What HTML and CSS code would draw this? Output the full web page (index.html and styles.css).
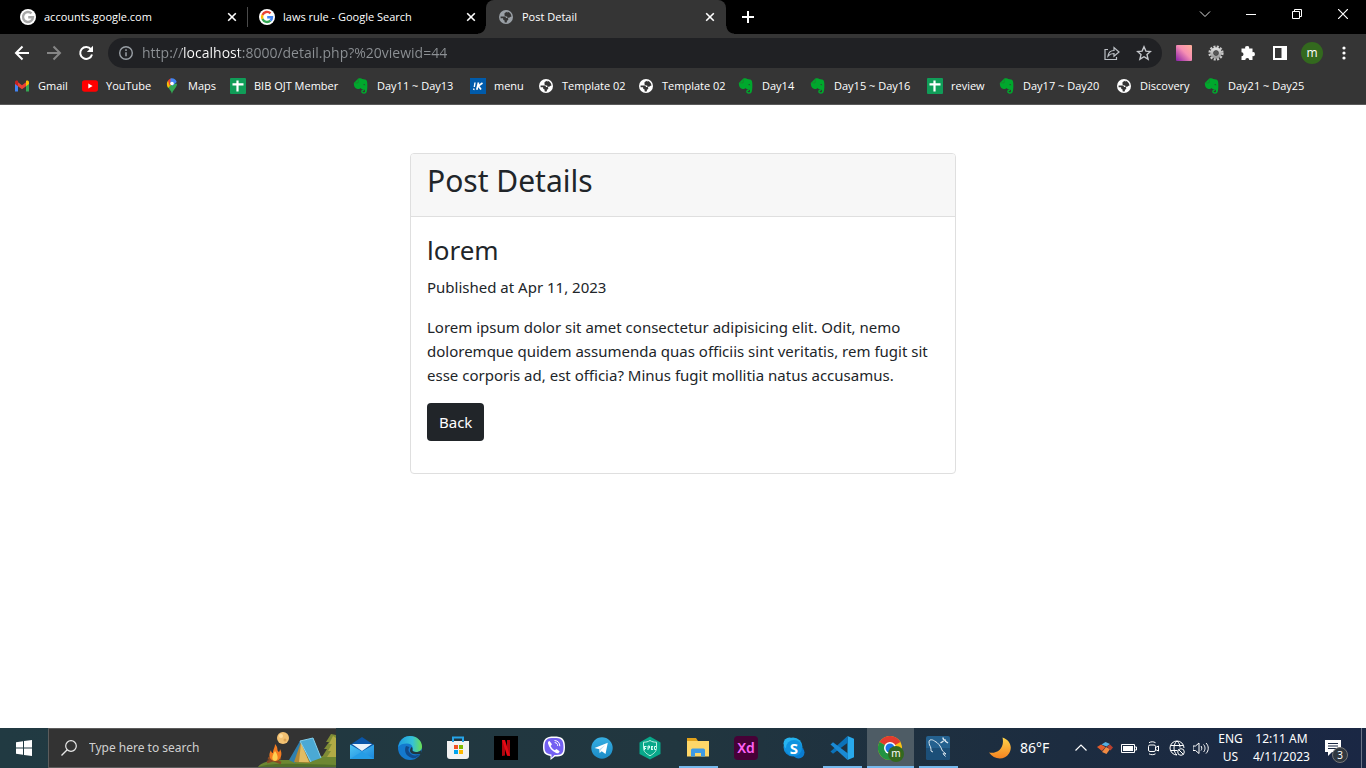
FILE: index.html
```html
<!DOCTYPE html>
<html lang="en">
<head>
<meta charset="utf-8">
<title>Post Detail</title>
<link rel="stylesheet" href="styles.css">
</head>
<body>
<svg class="defs" aria-hidden="true">
  <defs>
    <linearGradient id="gGear" x1="0" y1="0" x2="0" y2="1"><stop offset="0" stop-color="#ddd"/><stop offset="1" stop-color="#999"/></linearGradient>
    <linearGradient id="gPink" x1="1" y1="0" x2="0" y2="1"><stop offset="0" stop-color="#ffb199"/><stop offset=".45" stop-color="#f78fb3"/><stop offset="1" stop-color="#8a1fa8"/></linearGradient>
    <linearGradient id="gMoon" x1="0" y1="0" x2="0" y2="1"><stop offset="0" stop-color="#ffd54a"/><stop offset="1" stop-color="#f58220"/></linearGradient>
    <linearGradient id="gEdge" x1="0" y1="0" x2="1" y2="0"><stop offset="0" stop-color="#1f9de0"/><stop offset=".6" stop-color="#35c1d8"/><stop offset="1" stop-color="#6be04f"/></linearGradient>
    <linearGradient id="gMail" x1="0" y1="0" x2="1" y2="1"><stop offset="0" stop-color="#4fc7f5"/><stop offset="1" stop-color="#1a86dc"/></linearGradient>
    <linearGradient id="gTele" x1="0" y1="0" x2="0" y2="1"><stop offset="0" stop-color="#36aee2"/><stop offset="1" stop-color="#1c8cc7"/></linearGradient>
    <linearGradient id="gSky" x1="0" y1="0" x2="0" y2="1"><stop offset="0" stop-color="#22b7f2"/><stop offset="1" stop-color="#0a7cd0"/></linearGradient>
  </defs>
  <symbol id="x" viewBox="0 0 10 10"><path d="M1.200 1.200l7.600 7.600M8.800 1.200L1.200 8.800" fill="none" stroke="currentColor" stroke-width="1.600"/></symbol>
  <symbol id="globe" viewBox="0 0 16 16"><circle cx="8" cy="8" r="7" fill="currentColor"/><path d="M2.600 7.600H6c1.400 0 2 .7 2 1.500h1.200c.7 0 1.100.6 1.100 1.200 0 .8-.6 1.200-1.400 1.200v1.700c-.8.400-2 .300-2.300 0v-1.700c-.9 0-1.500-.6-1.500-1.400v-.9H2.600z" fill="#353535"/><path d="M9.600 2.700c0 1-.8 1.600-1.900 1.700v1h1.400c.8 0 1.400.6 1.400 1.500v.8h2.900c.1-2.300-1.500-4.300-3.800-5zM8.600 2.700L6.500 4.200v1.900c0 .8.600 1.400 1.400 1.400h1.300v1.300h2l2-1.600-2.700-.5z" fill="#353535"/></symbol>
  <symbol id="sheet" viewBox="0 0 16 16"><rect width="16" height="16" rx="1" fill="#109d58"/><path d="M7.500 2.500v11M2.500 6.300h11" stroke="#fff" stroke-width="2.200"/></symbol>
  <symbol id="evernote" viewBox="0 0 16 16"><path d="M5.300.5C7 0 8.600.2 9.300 1l2.700.5c1.500.3 2 1.200 2.200 3 .3 3 .2 6.500-.4 9-.4 1.600-1.300 2.200-3 2.200-1.600 0-2.600-.8-2.600-2.200s1-2.200 2.800-2.100v1.300c-.9-.1-1.400.2-1.400.8 0 .5.500.8 1.200.8.800 0 1.200-.4 1.200-1.400 0-1.100-.6-1.500-2-1.600-1.200-.1-1.900-.4-2.300-1.300-.7 1.100-2 1.300-3.900.8C1.700 10.200.8 8 .8 5z" fill="#00a82d"/><path d="M1.500 4.900h3.200c.4 0 .6-.2.600-.6V1.200" fill="none" stroke="#26722f" stroke-width=".6"/><path d="M10.300 7c.2-1 1.800-1 2 .3z" fill="#353535"/></symbol>
  <symbol id="google" viewBox="0 0 16 16"><circle cx="8" cy="8" r="8" fill="#fff"/><g fill="none" stroke-width="2.400"><path d="M11.500 4.300A5 5 0 0 0 3.500 5.900" stroke="#ea4335"/><path d="M3.500 5.900a5 5 0 0 0 0 4.200" stroke="#fbbc05"/><path d="M3.500 10.100a5 5 0 0 0 7.900 1.600" stroke="#34a853"/><path d="M11.400 11.700A4.700 4.700 0 0 0 13 8.200H8.200" stroke="#4285f4"/></g></symbol>
  <symbol id="chrome" viewBox="0 0 24 24"><circle cx="12" cy="12" r="12" fill="#fbc116"/><path d="M12 12L1.600 6A12 12 0 0 1 22.400 6z" fill="#e33b2e"/><path d="M12 12L1.600 6a12 12 0 0 0 10.400 18l5-9z" fill="#229342"/><circle cx="12" cy="12" r="6" fill="#fff"/><circle cx="12" cy="12" r="4.500" fill="#1a73e8"/></symbol>
</svg>

<header class="browser">
  <div class="tabs">
    <button class="tab" type="button">
      <svg class="i16" viewBox="0 0 16 16"><circle cx="8" cy="8" r="8" fill="#fff"/><path d="M11.500 4.400A5 5 0 1 0 13 8.200H8.200" fill="none" stroke="#a8a8a8" stroke-width="2.400"/></svg>
      <span class="tab-title">accounts.google.com</span>
      <svg class="i10"><use href="#x"/></svg>
    </button>
    <button class="tab divided" type="button">
      <svg class="i16"><use href="#google"/></svg>
      <span class="tab-title">laws rule - Google Search</span>
      <svg class="i10"><use href="#x"/></svg>
    </button>
    <button class="tab active" type="button">
      <svg class="i16 dim"><use href="#globe"/></svg>
      <span class="tab-title">Post Detail</span>
      <svg class="i10"><use href="#x"/></svg>
    </button>
    <button class="new-tab" type="button" aria-label="New tab"><svg class="i12" viewBox="0 0 12 12"><path d="M6 0v12M0 6h12" stroke="#fff" stroke-width="2"/></svg></button>
    <div class="window-controls">
      <button type="button" aria-label="Search tabs"><svg class="i12" viewBox="0 0 12 12"><path d="M1 3.500l5 5 5-5" fill="none" stroke="#ddd"/></svg></button>
      <button type="button" aria-label="Minimize"><svg class="i10" viewBox="0 0 10 10"><path d="M0 5.500h10" stroke="#fff"/></svg></button>
      <button type="button" aria-label="Restore"><svg class="i10" viewBox="0 0 10 10"><path d="M.5 2.500h7v7h-7zM2.500 2.500v-2h7v7h-2" fill="none" stroke="#fff"/></svg></button>
      <button type="button" aria-label="Close"><svg class="i10" viewBox="0 0 10 10"><path d="M0 0l10 10M10 0L0 10" stroke="#fff" stroke-width="1.200"/></svg></button>
    </div>
  </div>

  <div class="toolbar">
    <div class="nav-buttons">
      <button type="button" aria-label="Back"><svg class="i16" viewBox="0 0 16 16"><path d="M15 8H2.500M8.500 1.500L2 8l6.500 6.500" fill="none" stroke="#fff" stroke-width="2"/></svg></button>
      <button type="button" aria-label="Forward"><svg class="i16" viewBox="0 0 16 16"><path d="M1 8h12.500M7.500 1.500L14 8l-6.500 6.500" fill="none" stroke="#868686" stroke-width="2"/></svg></button>
      <button type="button" aria-label="Reload"><svg class="i16" viewBox="0 0 16 16"><path d="M13 4.300A6 6 0 1 0 14 9.500" fill="none" stroke="#fff" stroke-width="2"/><path d="M15 .8V7H8.800z" fill="#fff"/></svg></button>
    </div>
    <div class="omnibox">
      <svg class="i16" viewBox="0 0 16 16"><circle cx="8" cy="8" r="6.300" fill="none" stroke="#9aa0a6" stroke-width="1.400"/><path d="M8 7.200v4M8 4.300v1.600" stroke="#9aa0a6" stroke-width="1.500"/></svg>
      <input class="url" type="text" aria-label="Address" value="http://localhost:8000/detail.php?%20viewid=44">
      <button type="button" aria-label="Share"><svg class="i16" viewBox="0 0 16 16"><path d="M4 4.500H1v10h11.500V12M4 11c.5-4 3-5.500 6-5.500V2.500L15 7l-5 4.200V8.500C7.500 8.500 5.500 9.200 4 11z" fill="none" stroke="#bdc1c6" stroke-width="1.200"/></svg></button>
      <button type="button" aria-label="Bookmark"><svg class="i16" viewBox="0 0 16 16"><path d="M8 1.800l1.900 4.300 4.600.4-3.500 3.100 1.100 4.600L8 11.700l-4.100 2.500L5 9.600 1.500 6.500l4.600-.4z" fill="none" stroke="#c4c7cb" stroke-width="1.400"/></svg></button>
    </div>
    <div class="extensions">
      <button type="button" aria-label="Gradient extension"><svg class="i16" viewBox="0 0 16 16"><rect width="16" height="16" rx="1" fill="url(#gPink)"/></svg></button>
      <button type="button" aria-label="Settings extension"><svg class="i16" viewBox="0 0 16 16"><circle cx="8" cy="8" r="6.300" fill="none" stroke="#c9c9c9" stroke-width="2.600" stroke-dasharray="2 1.300"/><circle cx="8" cy="8" r="4.200" fill="none" stroke="url(#gGear)" stroke-width="3"/><circle cx="8" cy="8" r="2.300" fill="#555"/></svg></button>
      <button type="button" aria-label="Extensions"><svg class="i16" viewBox="0 0 16 16"><path d="M1.500 3.500h3.700a2 2 0 1 1 3.900 0h3.400v3.700a2 2 0 1 1 0 3.900V15H9.300a2 2 0 0 0-4 0H1.500v-3.800a2 2 0 0 0 0-4z" fill="#fff"/></svg></button>
      <button type="button" aria-label="Side panel"><svg class="i16" viewBox="0 0 16 16"><path d="M1 1h14v14H1zM3 3v10h6.500V3z" fill="#fff" fill-rule="evenodd"/></svg></button>
      <button class="avatar" type="button">m</button>
      <button type="button" aria-label="Menu"><svg class="i16" viewBox="0 0 16 16"><g fill="#fff"><circle cx="8" cy="3" r="1.600"/><circle cx="8" cy="8" r="1.600"/><circle cx="8" cy="13" r="1.600"/></g></svg></button>
    </div>
  </div>

  <nav class="bookmarks">
    <a href="#"><svg class="i16" viewBox="0 0 16 16"><path d="M1 4v9.500h3V7z" fill="#4285f4"/><path d="M15 4v9.500h-3V7z" fill="#34a853"/><path d="M4 4.300l4 3 4-3v4L8 11.200 4 8.300z" fill="#ea4335"/><path d="M1 4.500C1 2.500 3 2 4 3v5.300L1 6z" fill="#c5221f"/><path d="M15 4.500c0-2-2-2.500-3-1.500v5.300L15 6z" fill="#fbbc04"/></svg><span class="w27">Gmail</span></a>
    <a href="#"><svg class="i16" viewBox="0 0 16 16"><rect y="2.300" width="16" height="11.400" rx="2.600" fill="#f00"/><path d="M6.300 5.500L10.600 8l-4.300 2.500z" fill="#fff"/></svg><span class="w41">YouTube</span></a>
    <a href="#"><svg class="i16" viewBox="0 0 16 16"><path d="M8 16C7.500 12 3 10 3 5.700h10C13 10 8.500 12 8 16z" fill="#34a853"/><path d="M4.100 2.500L8 5.700l-3.900 4.200C2.500 7.500 2.400 4.500 4.100 2.500z" fill="#fbbc04"/><path d="M4 2.400A5 5 0 0 1 7 .5l1 5.300-2.500 2z" fill="#ea4335"/><path d="M6.500.4C9.500-.2 12 1.500 12.700 4L8.500 8 6.400 5z" fill="#4285f4"/><circle cx="8" cy="5.500" r="1.800" fill="#fff"/></svg><span class="w25">Maps</span></a>
    <a href="#"><svg class="i16"><use href="#sheet"/></svg><span class="w82">BIB OJT Member</span></a>
    <a href="#"><svg class="i16"><use href="#evernote"/></svg><span class="w76">Day11 ~ Day13</span></a>
    <a href="#"><svg class="i16" viewBox="0 0 16 16"><rect width="16" height="16" fill="#005bab"/><path d="M5 4.500L4.300 9M4 10.500l-.3 1.500" fill="none" stroke="#fff" stroke-width="1.400"/><path d="M8.500 4.500L6.800 11.800M12.500 5L8.500 7.900l2.500 3.700" fill="none" stroke="#fff" stroke-width="1.700"/></svg><span class="w27">menu</span></a>
    <a href="#"><svg class="i16"><use href="#globe"/></svg><span class="w59">Template 02</span></a>
    <a href="#"><svg class="i16"><use href="#globe"/></svg><span class="w59">Template 02</span></a>
    <a href="#"><svg class="i16"><use href="#evernote"/></svg><span class="w31">Day14</span></a>
    <a href="#"><svg class="i16"><use href="#evernote"/></svg><span class="w76">Day15 ~ Day16</span></a>
    <a href="#"><svg class="i16"><use href="#sheet"/></svg><span class="w31">review</span></a>
    <a href="#"><svg class="i16"><use href="#evernote"/></svg><span class="w76">Day17 ~ Day20</span></a>
    <a href="#"><svg class="i16"><use href="#globe"/></svg><span class="w47">Discovery</span></a>
    <a href="#"><svg class="i16"><use href="#evernote"/></svg><span class="w76">Day21 ~ Day25</span></a>
  </nav>
</header>

<main class="page">
  <article class="card">
    <div class="card-header"><h2>Post Details</h2></div>
    <div class="card-body">
      <h3>lorem</h3>
      <p>Published at Apr 11, 2023</p>
      <p>Lorem ipsum dolor sit amet consectetur adipisicing elit. Odit, nemo doloremque quidem assumenda quas officiis sint veritatis, rem fugit sit esse corporis ad, est officia? Minus fugit mollitia natus accusamus.</p>
      <a class="btn" href="#">Back</a>
    </div>
  </article>
</main>

<footer class="taskbar">
  <button class="start" type="button" aria-label="Start"><svg class="i16" viewBox="0 0 16 16"><path d="M0 2.300L7 1.300v6.200H0zM8 1.100L16 0v7.500H8zM0 8.500h7v6.200l-7-1zM8 8.500h8V16l-8-1.100z" fill="#fff"/></svg></button>
  <label class="search">
    <svg class="i16" viewBox="0 0 16 16"><circle cx="10" cy="6" r="5.300" fill="none" stroke="#e8e8e8" stroke-width="1.200"/><path d="M6.200 9.800L.5 15.500" stroke="#e8e8e8" stroke-width="1.300"/></svg>
    <input type="text" placeholder="Type here to search" aria-label="Type here to search">
    <svg class="camp" viewBox="0 0 78 38"><path d="M0 38c5-7 18-7 32-7 16-1 30-5 46-4v11z" fill="#6d8732"/><path d="M0 38c14-5 45-3 78-2v2z" fill="#52702a"/><circle cx="25" cy="9" r="6" fill="#f3c172"/><circle cx="23" cy="7" r="2" fill="#ffdc9d"/><circle cx="27" cy="11" r="1.500" fill="#dca354"/><path d="M73 5l-5 8h3l-5 7h3l-5 8h14V6z" fill="#7f8c36"/><path d="M75 7l-4 8h3l-4 7h3l-4 6h9V9z" fill="#b0aa45"/><path d="M9 33l14-4M10 29l13 5" stroke="#8a4b24" stroke-width="2.500"/><path d="M17 15c4 4 1 6 4 8 1-1 1-3 1-3 3 5 1 11-4 12-7 0-8-6-5-11 0 2 1 3 2 3 0-4 2-5 2-9z" fill="#f47c20"/><path d="M17 22c3 4 4 9 0 10-4-1-3-5 0-10z" fill="#ffd052"/><path d="M42 12l13-3 8 20-11 4z" fill="#4ba9d4"/><path d="M42 12L31 31l6 3 6-20 9 19z" fill="#2f7fae"/><path d="M43 13l-7 20 16 1z" fill="#b58a37"/><path d="M43 14l-2 19 10 0z" fill="#e1bc62"/><path d="M42 12l13-3 8 20M42 12l11 21" fill="none" stroke="#83d0ee"/></svg>
  </label>
  <div class="apps">
    <button type="button" aria-label="Mail"><svg class="i24" viewBox="0 0 24 24"><path d="M0 9L12 1l12 8-12 8z" fill="#0a56a8"/><path d="M2 8h20L12 15z" fill="#e8f3fb"/><path d="M0 8.500l12 7 12-7V23H0z" fill="url(#gMail)"/><path d="M0 23l12-7.500L24 23z" fill="#259de6"/></svg></button>
    <button type="button" aria-label="Edge"><svg class="i24" viewBox="0 0 24 24"><circle cx="12" cy="12" r="12" fill="#1479ce"/><path d="M.2 11C2 3 7 0 12 0c7 0 12 5 12 10.500 0 4-3 5.500-6 5.500-2.500 0-4-1-3.500-2.500.8-1.500 0-6-5.500-6-4 0-7 1-8.800 3.500z" fill="url(#gEdge)"/><path d="M8 10c-2 4-1 10 6 12 3 1 6-1 8-4-3 2-8 2-10-1-2-2-2-4-.5-6z" fill="#114a8b"/><path d="M14.500 13.500c-.5 1.500 1 2.500 3.500 2.500 2 0 4-.5 5.300-2v4l-3 0c-4 1-8-.5-8.300-3 0-1 .5-3 1.500-4 1 .5 1.200 1.800 1 2.500z" fill="#203741"/></svg></button>
    <button type="button" aria-label="Store"><svg class="i24" viewBox="0 0 24 24"><path d="M7 7V1.500h10V7" fill="none" stroke="#26a4e8" stroke-width="2"/><path d="M1 5h22v15a3 3 0 0 1-3 3H4a3 3 0 0 1-3-3z" fill="#f2f2f2"/><path d="M7 4v2M17 4v2" stroke="#26a4e8" stroke-width="2"/><path d="M8 9h4v4H8z" fill="#f25022"/><path d="M13 9h4v4h-4z" fill="#7fba00"/><path d="M8 14h4v4H8z" fill="#00a4ef"/><path d="M13 14h4v4h-4z" fill="#ffb900"/></svg></button>
    <button type="button" aria-label="Netflix"><svg class="i24" viewBox="0 0 24 24"><rect width="24" height="24" fill="#000"/><path d="M8 4h3v15.500l-3 .5zM13 4h3v16l-3-.5z" fill="#b1060f"/><path d="M8 4h3l5 16-3-.5z" fill="#e50914"/></svg></button>
    <button type="button" aria-label="Viber"><svg class="i24" viewBox="0 0 24 24"><path d="M12 .5c8 0 11 2 11 10.500S20 20.500 13 20.500L8.500 24v-4C3 19 1 17 1 11 1 3 4 .5 12 .5z" fill="#fff"/><path d="M12 2c7 0 9.500 1.500 9.500 9S19 19 12.500 19L9.500 22v-3.500C4.500 18 2.500 16 2.500 11 2.500 3.500 5 2 12 2z" fill="#7360f2"/><path d="M7.500 5l2.500 3.200-1.300 1.900c.8 2 2.200 3.300 4.100 4.100l1.600-1.300 3.200 2.400c-.6 1.900-1.700 2.500-3.400 1.700C10 15 7.200 12 6 7.500 5.800 6 6.500 5.300 7.500 5z" fill="#fff"/><path d="M12.500 4.500c3.500.2 5.300 2.400 5.300 5.700M12.700 6.600c2 .2 3 1.300 3 3.300" fill="none" stroke="#fff"/></svg></button>
    <button type="button" aria-label="Telegram"><svg class="i24" viewBox="0 0 24 24"><circle cx="12" cy="12" r="10.700" fill="url(#gTele)"/><path d="M4.500 12L17.800 6.700 15.500 18l-3.800-2.800-2 1.900-.4-3.800z" fill="#fff"/><path d="M9.300 13.300l6-4.300-4.600 5-.9 3.100z" fill="#b9dcee"/></svg></button>
    <button type="button" aria-label="Free VPN"><svg class="i24" viewBox="0 0 24 24"><path d="M12 .5l10.500 6v11.500L12 23.500 1.500 18V6.500z" fill="#08a88a"/><path d="M12 4.500c2 1.300 3.800 1.700 6.500 1.700v6c0 3-2.500 5.500-6.500 7.500-4-2-6.500-4.500-6.500-7.500v-6c2.700 0 4.500-.4 6.500-1.700z" fill="none" stroke="#bfeee3"/><path d="M6.500 10v4M6.500 10.500h2M6.500 12.500h1.500M10 14v-4h1.500v2H10M13.500 10v4M13.500 10.500h1.500M13.500 12h1.500M13.500 13.500h1.500M18 10.500h-1.500v3H18" fill="none" stroke="#d7fff6"/></svg></button>
    <button class="open" type="button" aria-label="File Explorer"><svg class="i24" viewBox="0 0 24 24"><path d="M1 2h9l2 3v3H1z" fill="#e2a21b"/><path d="M1 5h22v15.500H1z" fill="#ffd768"/><path d="M5 20.500V14a1.500 1.500 0 0 1 1.500-1.500h11A1.500 1.500 0 0 1 19 14v6.500h-4V17H9v3.500z" fill="#3f9be5"/></svg></button>
    <button type="button" aria-label="Adobe XD"><span class="xd">Xd</span></button>
    <button class="skype" type="button"><svg class="i24" viewBox="0 0 24 24"><circle cx="11" cy="11" r="9.500" fill="url(#gSky)"/><circle cx="7.500" cy="7.500" r="6" fill="#27b4f0"/><circle cx="16.500" cy="16.500" r="6" fill="#0a7cd0"/><circle cx="12" cy="12" r="8" fill="#1093df"/></svg><span>S</span></button>
    <button class="open" type="button" aria-label="Visual Studio Code"><svg class="i24" viewBox="0 0 24 24"><path d="M17.500 0L24 2.800v18.400L17.500 24z" fill="#28a9ec"/><path d="M17.500 0L2.500 13.700.5 15.500 3 17.700 18 6.500z" fill="#0b72b9"/><path d="M17.500 24L2.500 10.300.5 8.500 3 6.300 18 17.500z" fill="#1a8ad4"/></svg></button>
    <button class="open current" type="button" aria-label="Google Chrome"><svg class="i24"><use href="#chrome"/></svg><span class="badge">m</span></button>
    <button class="open" type="button" aria-label="MySQL Workbench"><svg class="i24" viewBox="0 0 24 24"><rect width="24" height="24" rx="2" fill="#24618f"/><path d="M0 12h24v10a2 2 0 0 1-2 2H2a2 2 0 0 1-2-2z" fill="#1c4f78"/><path d="M7 16l-2-1c0-2 0-4-1.500-6C3 7 2.500 4.500 4 4c2-.5 3 0 4.500 1 4 2 6 5 7.500 9 .7 2 2.500 2 4 4l-3-.3 2.500 2.800" fill="none" stroke="#dde9f1"/><path d="M14.500 7l3-2M17 1.500c0 2 1 3 3 2.500M19 5l3 2" stroke="#dde9f1" stroke-width="1.500" fill="none"/></svg></button>
  </div>
  <div class="tray">
    <button class="weather" type="button"><svg class="i24" viewBox="0 0 24 24"><path d="M14.500 1.500C22 4 25 11 21 17.500 16.500 24.500 6 24 1 16.500c8 1.500 16-4 13.500-15z" fill="url(#gMoon)"/></svg>86°F</button>
    <div class="status">
      <button type="button" aria-label="Show hidden icons"><svg class="i16" viewBox="0 0 16 16"><path d="M2.500 10.500L8 5l5.500 5.500" fill="none" stroke="#fff" stroke-width="1.200"/></svg></button>
      <button type="button" aria-label="Cube"><svg class="i16" viewBox="0 0 16 16"><path d="M4.500 4.500l4-2.500 4.500 2-3.500 2.500z" fill="#55aee0"/><path d="M0 7l4-2.500L8.500 7 5 11z" fill="#e05c2c"/><path d="M5 12l4-5 4 2-3.500 5z" fill="#f18a42"/><path d="M10 6.500l3-2 3 3-2.500 3z" fill="#b8402f"/></svg></button>
      <button type="button" aria-label="Battery"><svg class="i16" viewBox="0 0 16 16"><path d="M.5 4.500h13v8H.5zM14 7h1.500v3H14" fill="none" stroke="#fff"/><path d="M2 6h10v5H2z" fill="#fff"/></svg></button>
      <button type="button" aria-label="Meet Now"><svg class="i16" viewBox="0 0 16 16"><rect x="3.500" y="5" width="7" height="6.500" rx="1.500" fill="none" stroke="#fff"/><path d="M10.500 7.500l3-1.500v5l-3-1.500M4 2.700c2-1.200 4.500-1.200 6.500 0M4 13.800c2 1.200 4.500 1.200 6.500 0" fill="none" stroke="#fff"/></svg></button>
      <button type="button" aria-label="Network"><svg class="i16" viewBox="0 0 16 16"><g fill="none" stroke="#fff"><path d="M8 15a7 7 0 1 1 7-7M8 1C4 4 4 12 8 15M8 1c2 1.500 3 4 3 6.500M1.500 5.500h13M1.500 10.500h7"/><circle cx="12" cy="12" r="3.300" fill="#1c2c40"/><path d="M9.700 9.700l4.600 4.600"/></g></svg></button>
      <button type="button" aria-label="Volume"><svg class="i16" viewBox="0 0 16 16"><path d="M0 6h2.500L6 3v10.500L2.500 10.500H0zM8 6c1 1 1 3.500 0 4.500M10.500 4.500c2 2 2 5.500 0 7.500M13 3c3 3 3 7.500 0 10.500" fill="none" stroke="#fff"/></svg></button>
    </div>
    <button class="lang" type="button">ENG<br>US</button>
    <button class="clock" type="button">12:11 AM<br>4/11/2023</button>
    <button class="notify" type="button" aria-label="3 notifications"><svg class="i16" viewBox="0 0 16 16"><path d="M0 0h16v12H7l-4 4v-4H0z" fill="#fff"/><path d="M3 3.500h10M3 6h10M3 8.500h10" stroke="#1b2944"/></svg><span class="count">3</span></button>
  </div>
</footer>
</body>
</html>
```
FILE: styles.css
```css
*, *::before, *::after { box-sizing: border-box; }
body {
  margin: 0;
  min-height: 100vh;
  display: flex;
  flex-direction: column;
  background: #fff;
  color: #212529;
  font: 15px/24px "Noto Sans", "Open Sans", sans-serif;
}
button, input { font: inherit; color: inherit; border: 0; background: none; padding: 0; margin: 0; }
svg { display: block; flex: none; }
.defs { position: absolute; width: 0; height: 0; }
.i10 { width: 10px; height: 10px; }
.i12 { width: 12px; height: 12px; }
.i16 { width: 16px; height: 16px; }
.i24 { width: 24px; height: 24px; }
.dim { color: #9aa0a6; }

/* Browser chrome */
.browser { background: #353535; color: #fff; font-family: "Open Sans", "Noto Sans", sans-serif; font-size: 11px; line-height: 16px; border-bottom: 1px solid #5a5a5a; }
.tabs { display: flex; height: 34px; background: #000; }
.tab { display: flex; align-items: center; gap: 8px; flex: 0 1 239px; padding: 0 2px 0 20px; text-align: left; }
.tab-title { flex: 1; white-space: nowrap; overflow: hidden; }
.tab.divided { background: linear-gradient(#4a4a4a, #4a4a4a) 8px 50% / 1px 20px no-repeat; }
.tab.active { position: relative; flex-basis: 240px; margin-left: 8px; padding: 0 11px 0 12px; background: #353535; border-radius: 8px 8px 0 0; }
.tab.active::before, .tab.active::after { content: ""; position: absolute; bottom: 0; width: 8px; height: 8px; }
.tab.active::before { right: 100%; background: radial-gradient(circle at 0 0, #000 7px, #353535 8px); }
.tab.active::after { left: 100%; background: radial-gradient(circle at 100% 0, #000 7px, #353535 8px); }
.new-tab { width: 44px; display: grid; place-items: center; }
.window-controls { display: flex; margin-left: auto; height: 28px; }
.window-controls button { width: 46px; display: grid; place-items: center; }

.toolbar { display: flex; align-items: center; height: 38px; padding-left: 14px; }
.nav-buttons { display: flex; gap: 16px; width: 94px; }
.omnibox { flex: 1; display: flex; align-items: center; gap: 8px; height: 30px; padding: 0 6px 0 10px; border-radius: 15px; background: #202124; }
.omnibox button { width: 24px; display: grid; place-items: center; }
.url {
  flex: 1;
  min-width: 0;
  font-size: 14px;
  line-height: 20px;
  background: linear-gradient(90deg, #8d9195 40px, #fff 40px, #fff 97px, #8d9195 97px);
  background-clip: text;
  -webkit-background-clip: text;
  -webkit-text-fill-color: transparent;
}
.extensions { display: flex; align-items: center; padding: 0 6px; }
.extensions button { width: 32px; display: grid; place-items: center; }
.extensions .avatar { width: 22px; height: 22px; margin: 0 5px; border-radius: 50%; background: #33691e; font-size: 12px; }

.bookmarks { display: flex; height: 32px; padding: 0 14px 4px; gap: 17px; align-items: center; }
.bookmarks a { display: flex; align-items: center; gap: 8px; color: #fff; text-decoration: none; white-space: nowrap; }
.w25 { width: 25px; }
.w27 { width: 27px; }
.w31 { width: 31px; }
.w41 { width: 41px; }
.w47 { width: 47px; }
.w59 { width: 59px; }
.w76 { width: 76px; }
.w82 { width: 82px; }

/* Page */
.page { flex: 1; padding: 48px 12px; }
.card { max-width: 546px; margin: 0 auto; border: 1px solid #dfdfdf; border-radius: 4px; }
.card-header { padding: 8px 16px; background: #f7f7f7; border-bottom: 1px solid #dfdfdf; border-radius: 3px 3px 0 0; }
.card h2, .card h3 { margin: 0 0 8px; font-weight: 400; }
.card h2 { font-size: 30px; line-height: 38px; }
.card h3 { font-size: 26px; line-height: 34px; }
.card-body { padding: 16px 16px 32px; }
.card-body p { margin: 0 0 16px; }
.btn { display: inline-block; padding: 7px 12px; border-radius: 4px; background: #212529; color: #fff; text-decoration: none; vertical-align: top; }

/* Taskbar */
.taskbar { display: flex; height: 40px; color: #fff; font-size: 12px; line-height: 18px; background: linear-gradient(90deg, #213a42, #21363f 50%, #1c2c40 78%, #1a2744); }
.start { width: 48px; display: grid; place-items: center; }
.search { display: flex; align-items: center; gap: 12px; width: 288px; padding-left: 12px; border: 1px solid #5c5c5c; border-right: 0; background: #333; }
.search input { flex: 1; min-width: 0; }
.search input::placeholder { color: #d0d0d0; opacity: 1; }
.camp { width: 78px; height: 38px; }
.apps { display: flex; padding-left: 2px; }
.apps button { position: relative; width: 48px; display: grid; place-items: center; }
.open::after { content: ""; position: absolute; left: 5px; right: 4px; bottom: 0; height: 2px; background: #76b9ed; }
.apps .current { background: linear-gradient(#4e5c65, #4e5c65) 1px 0 / 47px 100% no-repeat; }
.current::after { left: 1px; right: 0; }
.xd { display: grid; place-items: center; width: 24px; height: 24px; border-radius: 4px; background: #470137; color: #ff61f6; font-size: 14px; font-weight: 600; }
.skype > * { grid-area: 1 / 1; }
.skype span { z-index: 1; font-size: 15px; font-weight: 700; }
.badge { position: absolute; left: 22px; top: 18px; width: 16px; height: 16px; border-radius: 50%; background: #33691e; font-size: 10px; line-height: 15px; }
.tray { display: flex; margin-left: auto; margin-right: 4px; border-right: 1px solid #6b7487; }
.weather { display: flex; align-items: center; gap: 8px; font-size: 14px; width: 81px; }
.status { display: flex; align-items: center; }
.status button { width: 24px; display: grid; place-items: center; }
.lang { width: 35px; }
.clock { width: 67px; }
.notify { position: relative; width: 36px; margin-right: 10px; display: grid; place-items: center; }
.count { position: absolute; left: 17px; top: 19px; width: 16px; height: 16px; border: 1px solid #777; border-radius: 50%; background: #303840; font-size: 10px; line-height: 14px; }
```
